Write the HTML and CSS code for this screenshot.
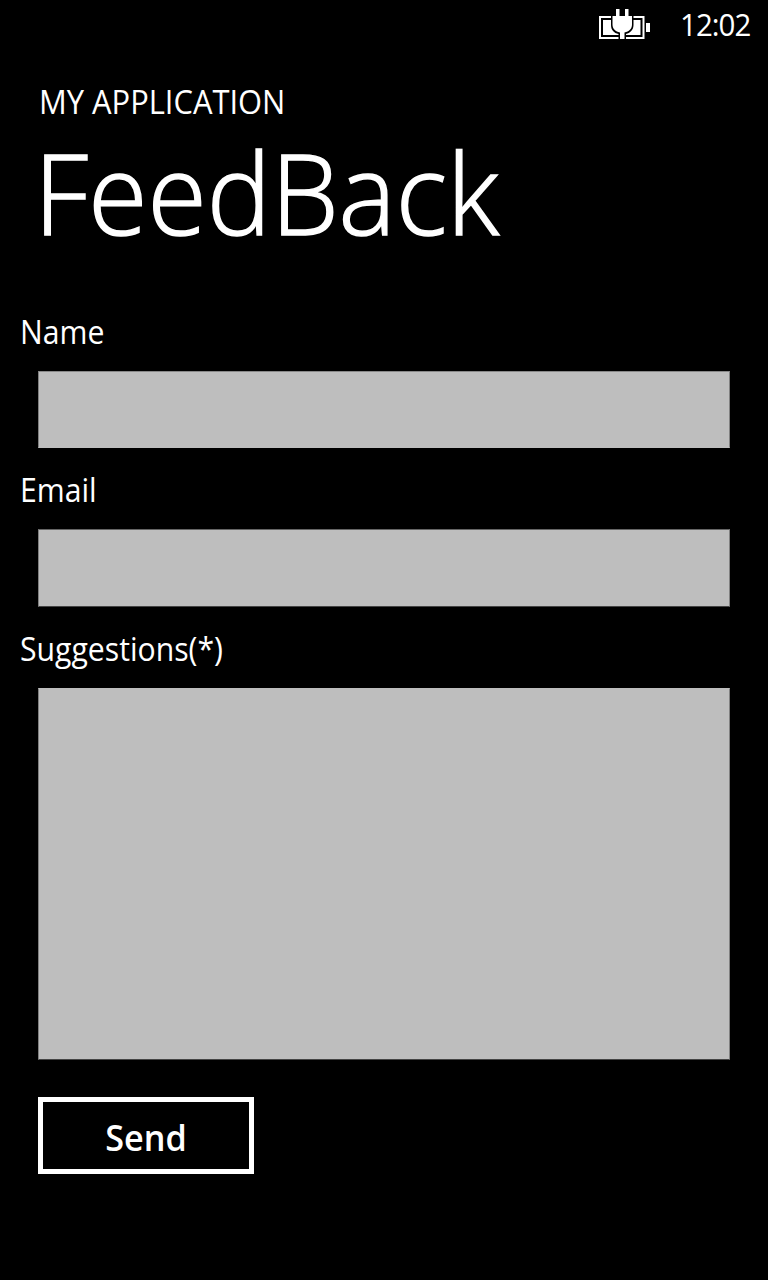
FILE: index.html
```html
<!DOCTYPE html>
<html lang="en">
<head>
<meta charset="utf-8">
<title>FeedBack</title>
<link rel="stylesheet" href="styles.css">
</head>
<body>
<div class="status">
  <svg class="battery" width="54" height="34" viewBox="0 0 54 34">
    <path fill="#fff" fill-rule="evenodd" d="M1 8H46.500V31H1ZM3 10V29H44.500V10Z"/>
    <path fill="#fff" d="M5 12H42.500V27H5ZM48 15H52V24H48Z"/>
    <path fill="#000" d="M13 7H35.500V17C35.500 22 32 25 28 26V31H20.500V26C16 25 13 22 13 17Z"/>
    <path fill="#fff" d="M18 1H21.500V8H27V1H30.500V8H34V16.500C34 21 31 23.500 26.500 24.500V31H22V24.500C17.500 23.500 14.500 21 14.500 16.500V8H18Z"/>
  </svg>
  <span class="clock">12:02</span>
</div>
<header class="heading">
  <div class="app-name">MY APPLICATION</div>
  <h1 class="title">FeedBack</h1>
</header>
<form class="form">
  <label class="label" for="name">Name</label>
  <input class="field field-name" id="name" type="text">
  <label class="label" for="email">Email</label>
  <input class="field field-email" id="email" type="text">
  <label class="label" for="suggestions">Suggestions(*)</label>
  <textarea class="field field-large" id="suggestions"></textarea>
  <button class="send" type="button"><span class="send-text">Send</span></button>
</form>
</body>
</html>
```
FILE: styles.css
```css
* { box-sizing: border-box; }
body {
  margin: 0;
  min-height: 1280px;
  background: #000;
  color: #fff;
  font-family: "Open Sans", "Noto Sans", sans-serif;
}
.status {
  display: flex;
  justify-content: flex-end;
  align-items: flex-start;
  height: 82px;
  padding: 8px 16px 0 0;
}
.battery { margin-right: 28px; }
.clock {
  width: 72px;
  font-size: 31px;
  line-height: 32px;
  letter-spacing: -1px;
  white-space: nowrap;
  transform: scaleX(0.95);
  transform-origin: left;
}
.heading { height: 230px; padding-left: 39px; }
.app-name {
  font-size: 32px;
  line-height: 40px;
  transform: scaleX(0.965);
  transform-origin: left;
}
.title {
  margin: 0 0 0 -5px;
  font-size: 112px;
  font-weight: 300;
  line-height: 139px;
  -webkit-text-stroke: 1.500px #fff;
  transform: scaleX(0.963);
  transform-origin: left;
}
.form { display: flex; flex-direction: column; padding: 0 38px 0 20px; }
.label {
  height: 59px;
  font-size: 32px;
  line-height: 40px;
  transform: scaleX(0.943);
  transform-origin: left;
}
.field {
  height: 77px;
  margin: 0 0 22px 18px;
  padding: 12px;
  border: 1px solid #808080;
  border-radius: 0;
  background: #bebebe;
  font: inherit;
  font-size: 32px;
  resize: none;
  outline: none;
}
.field-name {
  border-top-color: #888;
  border-bottom-color: #bebebe;
}
.field-email {
  height: 78px;
  border-top-color: #666;
  border-bottom-color: #444;
}
.field-large {
  height: 372px;
  margin-bottom: 37px;
  border-top-color: #bebebe;
  border-bottom-color: #444;
}
.send {
  width: 216px;
  height: 77px;
  margin-left: 18px;
  padding: 3px 0 0;
  border: 5px solid #fff;
  background: #000;
  color: #fff;
  font-family: inherit;
  font-size: 36px;
  font-weight: 600;
}
.send-text { display: block; transform: scaleX(0.95); }
```
